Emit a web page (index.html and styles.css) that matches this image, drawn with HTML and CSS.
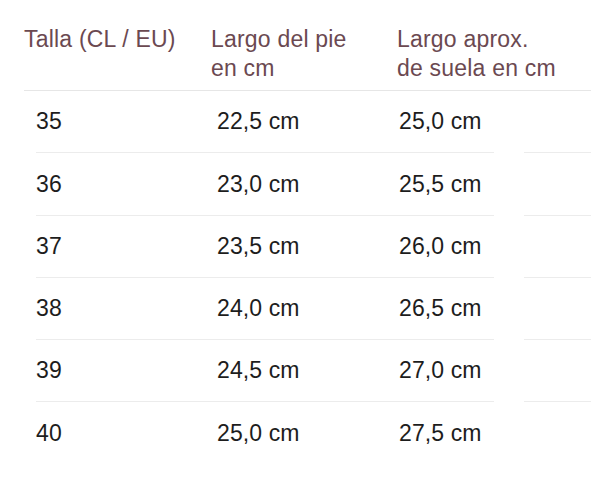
FILE: index.html
```html
<!DOCTYPE html>
<html lang="es">
<head>
<meta charset="utf-8">
<title>Tabla de tallas</title>
<link rel="stylesheet" href="styles.css">
</head>
<body>
<div class="size-table">
  <div class="head">
    <div class="hcell">Talla (CL / EU)</div>
    <div class="hcell">Largo del pie<br>en cm</div>
    <div class="hcell">Largo aprox.<br>de suela en cm</div>
  </div>
  <div class="row">
    <div class="cells"><span class="c1">35</span><span class="c2">22,5 cm</span><span class="c3">25,0 cm</span></div>
    <div class="extra"></div>
  </div>
  <div class="row">
    <div class="cells"><span class="c1">36</span><span class="c2">23,0 cm</span><span class="c3">25,5 cm</span></div>
    <div class="extra"></div>
  </div>
  <div class="row">
    <div class="cells"><span class="c1">37</span><span class="c2">23,5 cm</span><span class="c3">26,0 cm</span></div>
    <div class="extra"></div>
  </div>
  <div class="row">
    <div class="cells"><span class="c1">38</span><span class="c2">24,0 cm</span><span class="c3">26,5 cm</span></div>
    <div class="extra"></div>
  </div>
  <div class="row">
    <div class="cells"><span class="c1">39</span><span class="c2">24,5 cm</span><span class="c3">27,0 cm</span></div>
    <div class="extra"></div>
  </div>
  <div class="row last">
    <div class="cells"><span class="c1">40</span><span class="c2">25,0 cm</span><span class="c3">27,5 cm</span></div>
    <div class="extra"></div>
  </div>
</div>
</body>
</html>
```
FILE: styles.css
```css
html, body {
  margin: 0;
  padding: 0;
  background: #ffffff;
}
body {
  font-family: "Liberation Sans", Arial, sans-serif;
  font-size: 23px;
  width: 591px;
  overflow: hidden;
}
.size-table {
  display: flex;
  flex-direction: column;
}
.head {
  display: grid;
  grid-template-columns: 187px 186px 1fr;
  margin-left: 24px;
  padding-top: 25px;
  padding-bottom: 7px;
  border-bottom: 1px solid #e6e6e6;
  color: #6b4951;
  line-height: 29px;
  letter-spacing: 0.2px;
}
.row {
  display: grid;
  grid-template-columns: 458px 1fr;
  column-gap: 30px;
  margin-left: 36px;
  height: 62px;
}
.row:first-of-type {
  height: 62px;
}
.row:nth-child(3) {
  height: 63px;
}
.cells {
  display: grid;
  grid-template-columns: 181px 182px 1fr;
  align-items: center;
  border-bottom: 1px solid #ececec;
  color: #1d1d1d;
  letter-spacing: 0.1px;
}
.extra {
  border-bottom: 1px solid #ececec;
}
.row.last .cells,
.row.last .extra {
  border-bottom: none;
}
```
